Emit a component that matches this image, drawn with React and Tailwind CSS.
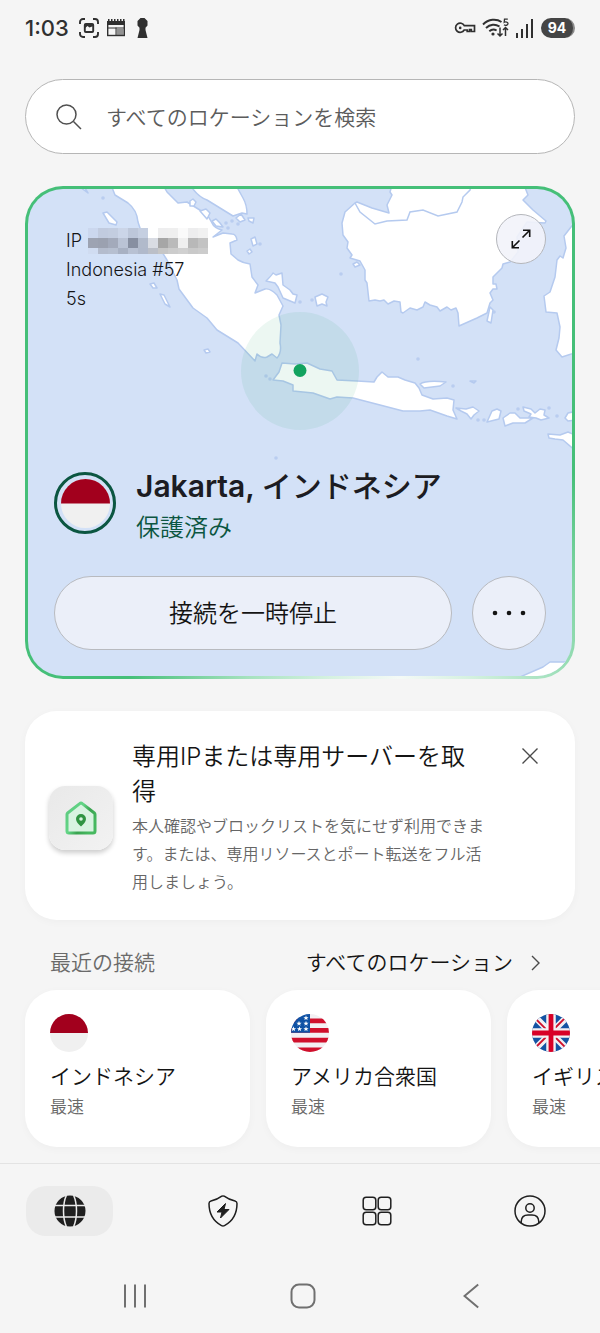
import React from 'react';

const StatusBar = () => (
  <header className="flex items-center justify-between h-14 px-[25px] text-[#303030]">
    <div className="flex items-center">
      <span className="text-[22px] leading-7 font-medium">1:03</span>
      <svg className="ml-2.5 shrink-0" width="20" height="20" viewBox="0 0 20 20" fill="none" stroke="currentColor" strokeWidth="1.9">
        <path d="M1 6V4a3 3 0 0 1 3-3h2M14 1h2a3 3 0 0 1 3 3v2M19 14v2a3 3 0 0 1-3 3h-2M6 19H4a3 3 0 0 1-3-3v-2" />
        <rect x="5.8" y="6" width="8.4" height="8" rx="1" />
        <path d="M5.500 10.500 8.500 8l2 1.500 4-1.500V6h-9z" fill="currentColor" stroke="none" />
      </svg>
      <svg className="ml-2 shrink-0" width="18" height="18" viewBox="0 0 18 18">
        <rect x="0.700" y="3" width="16.600" height="13.500" fill="none" stroke="currentColor" strokeWidth="1.4" />
        <path d="M0 2h18v4H0zM1 0h1.500v2H1zM4 0h1.500v2H4zM7 0h1.500v2H7zM10 0h1.500v2H10zM13 0h1.500v2H13zM16 0h1.500v2H16z" fill="currentColor" />
        <path d="M1 9h8M9 8.500v8M9 9h8" stroke="currentColor" strokeWidth="1" />
        <path d="M9.500 10h7v6h-7z" fill="currentColor" opacity="0.5" />
      </svg>
      <svg className="ml-3 shrink-0" width="11" height="20" viewBox="0 0 11 20" fill="currentColor">
        <path d="M3.500 0h4L10.500 3v4.500L8.500 9.700V12l2 8H.5l2-8V9.700L.5 7.500V3z" />
      </svg>
    </div>
    <div className="flex items-center">
      <svg width="22" height="14" viewBox="0 0 22 14" fill="none" stroke="currentColor" strokeWidth="1.7">
        <path d="M10.300 4.700H20.500v5.800h-3.200V8.700h-1.800v1.800h-2.300V9h-3a4.600 4.600 0 1 1 .1-4.300z" />
        <circle cx="6.200" cy="6.900" r="1.300" fill="currentColor" stroke="none" />
      </svg>
      <svg className="ml-1.5" width="28" height="20" viewBox="0 0 28 20" fill="none" stroke="currentColor" strokeWidth="1.9">
        <path d="M1 6.500C6.500.8 14.500.500 19.500 4M4 10c4-4 9.500-4.200 13.500-1.500M7.300 13.200c2.200-2 5-2.200 7.300-.7" />
        <circle cx="11" cy="16" r="1.600" fill="currentColor" stroke="none" />
        <path d="M18 9.500V18M15.500 15.500 18 18l2.500-2.500M23.500 18V9.800M21 12l2.500-2.500L26 12" strokeWidth="1.500" />
        <path d="M25.800 1.200h-3.300l-.3 3.100c1.400-.8 3.800-.4 3.800 1.300 0 1.800-2.600 2.200-4 1.200" strokeWidth="1.300" />
      </svg>
      <svg className="ml-1.5" width="17" height="19" viewBox="0 0 17 19" fill="currentColor">
        <path d="M0 14h2v5H0zM5 10h2v9H5zM10 5h2v14h-2zM15 0h2v19h-2z" />
      </svg>
      <span className="ml-2 flex items-center justify-center w-[34px] h-5 rounded-full bg-[#454545] border-r-2 border-[#8a8a8a] text-white text-sm font-bold">
        94
      </span>
    </div>
  </header>
);

const SearchBar = () => (
  <label className="flex items-center h-[75px] pl-[30px] pr-6 bg-white border border-[#b6b6b6] rounded-full">
    <svg className="shrink-0" width="26" height="26" viewBox="0 0 26 26" fill="none" stroke="#505050" strokeWidth="1.500">
      <circle cx="10.500" cy="10.500" r="9.500" />
      <path d="m17.500 17.500 7.500 7.500" />
    </svg>
    <input
      type="text"
      aria-label="すべてのロケーションを検索"
      placeholder="すべてのロケーションを検索"
      className="flex-1 min-w-0 ml-6 pt-0.5 text-[21px] leading-8 font-[350] text-[#333] placeholder:text-[#5c5c5c] outline-none"
    />
  </label>
);

const LAND = [
  // Sumatra
  'M111 185 115 195 128 203 Q137 210 138 222L141 231 148 238 162 252 167 260 177 280 179 289 193 308 207 318 217 330 238 343 255 361 257 354 Q262 359 267 357L272 354 277 358Q282 352 280 343L281 325 279 315 283 306 277 295Q270 288 265 289L255 293 258 285 252 277 250 264Q243 263 238 260L231 254 230 243 237 240Q236 234 232 234L223 233 213 237 222 230Q214 228 212 223L208 216 203 212 187 202 178 203 167 192 163 185z',
  // Malay peninsula
  'M190 185Q198 197 207 200L220 208 233 216 242 213 247 214Q247 205 243 198L238 189 236 185z',
  // Bangka, Belitung
  'M266 281Q272 275 273 273L276 275 282 273 283 285 290 290 293 294 297 295 295 303 283 298 278 287 275 283z',
  'M315 297 322 294 328 297 326 302 327 306 322 304 317 306z',
  // Borneo
  'M392 185 390 192 392 195 387 205 389 213 372 208 357 202 355 203 345 212 342 223 343 235 348 242 347 248 352 255 350 258 360 261 365 270 365 280 367 283 369 301 375 300 380 301 384 300 388 304 394 301 400 302 401 312 403 313 410 308 417 310 423 307 425 302 430 305 437 307 440 311 447 307 451 310 456 308 458 313 459 326 477 318 487 313 490 303 493 300 490 293 493 289 497 289 496 284 493 284 493 277 502 268 503 264 510 262 518 252 517 237 527 222 545 223 546 221 533 210 523 200 528 195 524 185z',
  'M353 264 357 262 360 265 355 267z',
  'M490 307 493 310 491 323 487 321z',
  // Sulawesi
  'M577 220 571 227 564 236 566 248 563 258 560 256 557 260 555 277 550 292 544 296 546 312 557 313 560 327 559 338 556 350 562 357 577 352z',
  // Java, Madura
  'M282 363 279 372 273 380 283 381 293 385 293 391 313 393 330 399 337 397 353 398 380 405 403 411 420 411 430 410 447 416 457 419 453 410 454 400 447 398 433 399 422 395 419 388 415 383 405 380 398 377 388 377 382 372 377 377 374 382 357 381 337 380 332 371 320 369 307 363 295 364z',
  'M420 384Q426 380 446 382L440 386 424 388z',
  // Lesser Sunda
  'M456 408 466 409 473 407 479 411 474 415 471 419 467 414 461 411z',
  'M492 411 497 409 501 411 499 419 487 422z',
  'M503 418 510 413 515 413 520 418 533 418 525 423 513 423 505 426z',
  'M523 407 531 409 535 413 540 409 545 410 544 415 549 418 541 420 536 418 529 417 531 414 524 411z',
  'M577 411 568 413 565 418 568 421 577 420z',
  'M548 434 560 435 568 432 577 436 577 452 563 440 555 439 549 438z',
  // small islands off the west coast
  'M103 213 107 212 117 222 116 225 109 223z',
  'M150 284 154 283 157 288 153 288z',
  'M160 294 164 295 170 307 165 304z',
  'M204 350 208 349 210 352 206 353z',
  'M190 201 193 199 196 202 194 206 190 206z',
  'M200 211 206 209 210 213 207 219z',
  'M212 221 216 219 220 223 223 227 216 226z',
  'M236 218 241 214 245 220 240 222z',
  'M248 218 254 218 253 223 249 221z',
  'M251 239 255 237 257 244 253 246z',
  'M247 251 250 249 252 252 249 254z',
  'M470 381 476 381 474 383z',
  'M80 187 88 193 85 188z',
  // Australia
  'M520 677 543 667 550 662 565 662 580 662V680H515z',
];

const SPECKS = [
  [103, 198], [226, 223], [232, 221], [228, 228], [238, 224], [260, 244], [341, 274], [300, 302],
  [312, 300], [418, 359], [453, 386], [266, 376], [270, 379], [276, 458], [478, 420],
  [549, 408], [557, 416], [484, 420], [518, 409], [494, 312],
];

const Map = () => (
  <svg
    className="absolute inset-0 w-full h-full"
    viewBox="28 189 544 487"
    preserveAspectRatio="xMidYMid slice"
    aria-hidden="true"
  >
    <g fill="#fff" stroke="#b5caef" strokeWidth="1.500" strokeLinejoin="round">
      {LAND.map((d) => (
        <path key={d} d={d} />
      ))}
    </g>
    <path
      d="M355 203 360 212 375 224 387 221 407 220 410 212 423 210 438 216 457 212 462 202 463 197 470 190 471 186"
      fill="none"
      stroke="#b5caef"
      strokeWidth="1.500"
    />
    {SPECKS.map(([x, y]) => (
      <circle key={`${x}-${y}`} cx={x} cy={y} r="1.800" fill="#b9cdf0" />
    ))}
    <circle cx="300" cy="371" r="59" fill="#109c5c" opacity="0.080" />
    <circle cx="300" cy="370.500" r="6.500" fill="#12a35f" />
  </svg>
);

const MASK_ROWS = [
  { y: 0, h: 10, fills: ['#cbd7ee', '#c1cbdf', '#c3cde0', '#cbd5e8', '#bdc7da', '#c5cfe1', '#fff', '#eeeeef', '#efefef', '#fafafa', '#ededee', '#f1f1f1'] },
  { y: 10, h: 10, fills: ['#9da3b2', '#9ba1b0', '#a3aabb', '#bac3d5', '#878fa1', '#b1bacb', '#d9dce3', '#a6a6a6', '#bababa', '#efefef', '#b8b8b8', '#c3c3c3'] },
  { y: 20, h: 6, fills: ['#d0dcf1', '#b4bccd', '#b6bfd0', '#a8b1c3', '#b8c1d3', '#b0b9cb', '#bbbfc8', '#c6c6c6', '#cccccc', '#d0d0d0', '#c9c9c9', '#cccccc'] },
];

const MaskedIp = () => (
  <svg className="ml-1.5" width="120" height="26" viewBox="0 0 120 26" shapeRendering="crispEdges" aria-hidden="true">
    {MASK_ROWS.map((row) =>
      row.fills.map((fill, i) => (
        <rect key={`${row.y}-${i}`} x={i * 10} y={row.y} width="10" height={row.h} fill={fill} />
      ))
    )}
  </svg>
);

const FlagId = ({ className }) => (
  <svg className={className} viewBox="0 0 38 38">
    <circle cx="19" cy="19" r="19" fill="#f0f0f0" />
    <path d="M0 19a19 19 0 0 1 38 0z" fill="#a2001d" />
  </svg>
);

const STARS = [[15, 4], [8, 9.500], [15, 9.500], [2.500, 15], [8.500, 15], [15, 15]];

const FlagUs = ({ className }) => (
  <svg className={className} viewBox="0 0 38 38">
    <clipPath id="us">
      <circle cx="19" cy="19" r="19" />
    </clipPath>
    <g clipPath="url(#us)">
      <path d="M0 0h38v38H0z" fill="#f3f0f3" />
      <path d="M0 4.500h38v4.700H0zM0 14h38v4.700H0zM0 23.800h38v4.700H0zM0 33.500h38V38H0z" fill="#d0102c" />
      <path d="M0 0h19v18.700H0z" fill="#0f52a5" />
      {STARS.map(([x, y]) => (
        <path
          key={`${x}-${y}`}
          transform={`translate(${x} ${y})`}
          d="M0-2.700.700-.800 2.600-.800 1.100.400 1.600 2.300 0 1.100-1.600 2.300-1.100.400-2.600-.800-.700-.800z"
          fill="#fff"
        />
      ))}
    </g>
  </svg>
);

const FlagGb = ({ className }) => (
  <svg className={className} viewBox="0 0 38 38">
    <clipPath id="gb">
      <circle cx="19" cy="19" r="19" />
    </clipPath>
    <g clipPath="url(#gb)">
      <path d="M0 0h38v38H0z" fill="#1453a3" />
      <path d="M0 0 38 38M38 0 0 38" stroke="#f3f0f3" strokeWidth="6.500" />
      <path d="M0 1.200 19 20.200M19 19 38 38M37 0 19 18M0 37 19 18" stroke="#d0102c" strokeWidth="1.800" />
      <path d="M19 0v38M0 19h38" stroke="#f3f0f3" strokeWidth="9.500" />
      <path d="M19 0v38M0 19h38" stroke="#d80027" strokeWidth="4.800" />
    </g>
  </svg>
);

const ConnectionCard = () => (
  <section className="mt-8 p-[3px] rounded-[38px] bg-[radial-gradient(circle_at_68%_100%,#f5faf7_0px,#d5f1e0_70px,#a6e2bf_150px,#45bf78_270px)]">
    <div className="relative overflow-hidden rounded-[35px] bg-[#d3e1f7] px-[26px] pt-[25px] pb-[26px]">
      <Map />
      <div className="relative">
        <div className="flex items-start justify-between">
          <div className="mt-3 ml-3 text-lg leading-[29px] font-[350] text-[#141416]">
            <p className="flex items-center h-[29px]">
              IP
              <MaskedIp />
            </p>
            <p>Indonesia #57</p>
            <p>5s</p>
          </div>
          <button
            type="button"
            aria-label="地図を拡大"
            className="flex items-center justify-center size-[50px] rounded-full border border-[#b4b6bb] bg-[#f2f3fa]/90"
          >
            <svg width="20" height="20" viewBox="0 0 20 20" fill="none" stroke="#111" strokeWidth="1.600">
              <path d="M11.500 8.500 18.500 1.500M12 1.300h6.700V8M8.500 11.500l-7 7M1.300 12v6.700H8" />
            </svg>
          </button>
        </div>

        <div className="flex items-start gap-5 mt-[152px]">
          <div className="flex items-center justify-center size-[62px] shrink-0 mt-[7px] rounded-full border-[3px] border-[#0b5641]">
            <FlagId className="size-[49px]" />
          </div>
          <div>
            <h1 className="text-[30px] leading-[42px] font-semibold text-[#1c1c22]">
              Jakarta, <span className="font-medium">インドネシア</span>
            </h1>
            <p className="text-2xl leading-[42px] font-[350] text-[#0b5641]">保護済み</p>
          </div>
        </div>

        <div className="flex items-center gap-5 mt-[27px]">
          <button
            type="button"
            className="flex-1 h-[74px] pt-0.5 rounded-full border border-[#b8babf] bg-[#ebeff9] text-2xl font-[350] text-[#141414]"
          >
            接続を一時停止
          </button>
          <button
            type="button"
            aria-label="その他"
            className="flex items-center justify-center size-[74px] shrink-0 rounded-full border border-[#b8babf] bg-[#ebeff9]"
          >
            <svg width="34" height="6" viewBox="0 0 34 6" fill="#141414">
              <circle cx="3" cy="3" r="2.300" />
              <circle cx="17" cy="3" r="2.300" />
              <circle cx="31" cy="3" r="2.300" />
            </svg>
          </button>
        </div>
      </div>
    </div>
  </section>
);

const PromoCard = () => (
  <section className="flex items-center mt-8 pt-7 pb-6 pl-6 pr-[25px] rounded-[32px] bg-white shadow-[0_2px_8px_rgba(0,0,0,0.03)]">
    <div className="flex items-center justify-center size-16 shrink-0 rounded-2xl bg-linear-to-br from-[#e9e9e9] to-[#f2f2f2] shadow-[0_3px_5px_rgba(0,0,0,0.2)]">
      <svg width="32" height="34" viewBox="0 0 32 34">
        <defs>
          <linearGradient id="house" x1="0" y1="0" x2="1" y2="0.600">
            <stop offset="0" stopColor="#5cc97f" />
            <stop offset="0.450" stopColor="#63d586" />
            <stop offset="0.700" stopColor="#3aa350" />
            <stop offset="1" stopColor="#46b85f" />
          </linearGradient>
        </defs>
        <path
          d="M14.700 2.700a2 2 0 0 1 2.600 0L29.300 12a2 2 0 0 1 .7 1.600V30a2 2 0 0 1-2 2H4a2 2 0 0 1-2-2V13.600a2 2 0 0 1 .7-1.600z"
          fill="#d8f3e1"
          stroke="url(#house)"
          strokeWidth="3"
        />
        <path d="M16 13a5 5 0 0 1 5 5c0 3-2.500 5-5 7.500-2.500-2.500-5-4.500-5-7.500a5 5 0 0 1 5-5z" fill="#2f9442" />
        <circle cx="16" cy="18" r="1.800" fill="#d8f3e1" />
      </svg>
    </div>
    <div className="flex-1 ml-[19px]">
      <h2 className="text-2xl leading-[35px] font-[350] text-[#141414]">専用IPまたは専用サーバーを取得</h2>
      <p className="mt-[3px] text-base leading-7 font-[350] text-[#666]">
        本人確認やブロックリストを気にせず利用できます。または、専用リソースとポート転送をフル活用しましょう。
      </p>
    </div>
    <button type="button" aria-label="閉じる" className="flex items-center justify-center size-10 ml-[22px] mt-[-3px] self-start">
      <svg width="16" height="16" viewBox="0 0 16 16" stroke="#4a4a4a" strokeWidth="1.400">
        <path d="M.5.5l15 15M15.500.5l-15 15" />
      </svg>
    </button>
  </section>
);

const recent = [
  { name: 'インドネシア', Flag: FlagId },
  { name: 'アメリカ合衆国', Flag: FlagUs },
  { name: 'イギリス', Flag: FlagGb },
];

const RecentConnections = () => (
  <section className="mt-6">
    <div className="flex items-center justify-between h-[38px] pl-[50px] pr-[60px] text-[21px]">
      <h2 className="font-[350] text-[#6a6a6a]">最近の接続</h2>
      <a href="#locations" className="flex items-center gap-[18px] font-[350] text-[#141414]">
        すべてのロケーション
        <svg width="9" height="16" viewBox="0 0 9 16" fill="none" stroke="#4a4a4a" strokeWidth="1.400">
          <path d="m1 1 7 7-7 7" />
        </svg>
      </a>
    </div>
    <ul className="flex gap-4 pt-2 pb-4 pl-[25px] overflow-hidden">
      {recent.map(({ name, Flag }) => (
        <li key={name} className="shrink-0">
          <button
            type="button"
            className="block w-[225px] pt-6 pb-[25px] px-[25px] rounded-[32px] bg-white text-left font-[350] shadow-[0_2px_8px_rgba(0,0,0,0.03)]"
          >
            <Flag className="size-[38px]" />
            <span className="block mt-2.5 text-[21px] leading-[30px] text-[#141414] whitespace-nowrap">{name}</span>
            <span className="block text-[17px] leading-[30px] text-[#6a6a6a]">最速</span>
          </button>
        </li>
      ))}
    </ul>
  </section>
);

const GlobeIcon = () => (
  <svg width="32" height="32" viewBox="0 0 32 32">
    <circle cx="16" cy="16" r="15.500" fill="#1f1f1f" />
    <g fill="none" stroke="#ebebeb" strokeWidth="1.500">
      <path d="M0 10.500h32M0 22h32" />
      <path d="M12.500 0C8.500 9 8.500 23 12.500 32M19.500 0c4 9 4 23 0 32" />
    </g>
  </svg>
);

const ShieldIcon = () => (
  <svg width="32" height="32" viewBox="0 0 32 32" fill="none" stroke="#1f1f1f" strokeWidth="1.500" strokeLinejoin="round">
    <path d="M14.800 1.200q1.200-.6 2.400 0Q22 4.800 28 6q2 .5 2 2.500C30 18 26 26 17.500 30.600q-1.500.8-3 0C6 26 2 18 2 8.500Q2 6.500 4 6q6-1.200 10.800-4.800z" />
    <path d="M18.500 8.500 10 17h5l-1.500 6L22 14.500h-5z" fill="#1f1f1f" strokeWidth="1" />
  </svg>
);

const GridIcon = () => (
  <svg width="30" height="30" viewBox="0 0 30 30" fill="none" stroke="#1f1f1f" strokeWidth="1.500">
    <rect x="1.200" y="1.200" width="12.600" height="12.600" rx="3" />
    <rect x="16.200" y="1.200" width="12.600" height="12.600" rx="3" />
    <rect x="1.200" y="16.200" width="12.600" height="12.600" rx="3" />
    <rect x="16.200" y="16.200" width="12.600" height="12.600" rx="3" />
  </svg>
);

const ProfileIcon = () => (
  <svg width="32" height="32" viewBox="0 0 32 32" fill="none" stroke="#1f1f1f" strokeWidth="1.500">
    <circle cx="16" cy="16" r="15" />
    <circle cx="16" cy="13" r="4.200" />
    <path d="M7.200 28v-1.500Q7.500 20 14 20h4q6.500 0 6.800 6.500V28" />
  </svg>
);

const tabs = [
  { label: 'VPN', Icon: GlobeIcon, active: true },
  { label: '脅威対策', Icon: ShieldIcon },
  { label: 'ツール', Icon: GridIcon },
  { label: 'プロフィール', Icon: ProfileIcon },
];

const TabBar = () => (
  <nav className="flex items-center justify-between pt-[22px] px-[26px] border-t border-[#e3e3e3]">
    {tabs.map(({ label, Icon, active }) => (
      <button
        key={label}
        type="button"
        aria-label={label}
        className={`flex items-center justify-center w-[87px] h-[50px] rounded-[20px] ${active ? 'bg-[#ebebeb]' : ''}`}
      >
        <Icon />
      </button>
    ))}
  </nav>
);

const SystemNav = () => (
  <nav className="flex mt-7 pl-[51px] pr-[45px] pb-[5px]">
    <button type="button" aria-label="履歴" className="flex flex-1 items-center justify-center h-16">
      <svg width="24" height="24" viewBox="0 0 24 24" stroke="#707070" strokeWidth="2">
        <path d="M2 .5v23M12 .5v23M22 .5v23" />
      </svg>
    </button>
    <button type="button" aria-label="ホーム" className="flex flex-1 items-center justify-center h-16">
      <svg width="26" height="26" viewBox="0 0 26 26" fill="none" stroke="#707070" strokeWidth="2">
        <rect x="1.500" y="1.500" width="23" height="23" rx="7.500" />
      </svg>
    </button>
    <button type="button" aria-label="戻る" className="flex flex-1 items-center justify-center h-16">
      <svg width="16" height="26" viewBox="0 0 16 26" fill="none" stroke="#707070" strokeWidth="2">
        <path d="M15.200 1.500 1.500 13l13.700 11.500" />
      </svg>
    </button>
  </nav>
);

const App = () => (
  <div className="min-h-screen overflow-hidden bg-[#f5f5f5] font-['Inter','Noto_Sans_CJK_JP',sans-serif]" lang="ja">
    <StatusBar />
    <main>
      <div className="px-[25px] pt-[23px]">
        <SearchBar />
        <ConnectionCard />
        <PromoCard />
      </div>
      <RecentConnections />
    </main>
    <TabBar />
    <SystemNav />
  </div>
);

export default App;
